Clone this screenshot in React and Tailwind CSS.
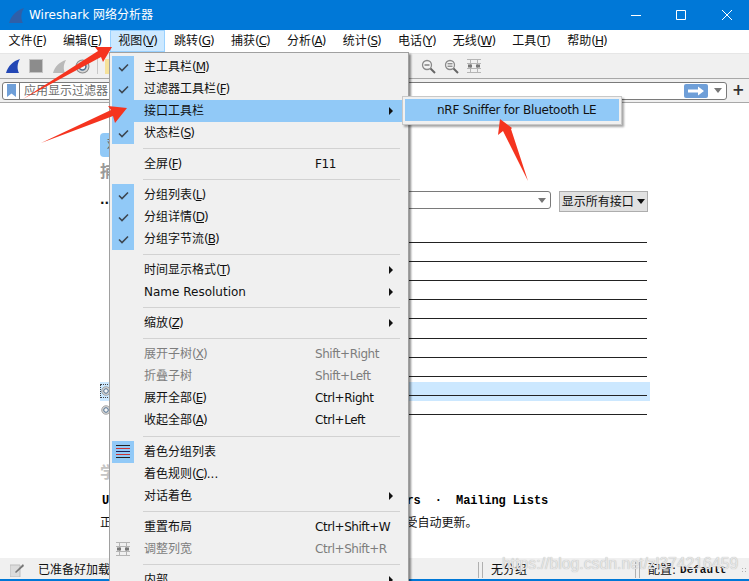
const MENUS = [
  ['文件', 'F'], ['编辑', 'E'], ['视图', 'V'], ['跳转', 'G'], ['捕获', 'C'], ['分析', 'A'],
  ['统计', 'S'], ['电话', 'Y'], ['无线', 'W'], ['工具', 'T'], ['帮助', 'H'],
];

const VIEW_MENU = [
  { label: '主工具栏', key: 'M', checked: true },
  { label: '过滤器工具栏', key: 'F', checked: true },
  { label: '接口工具栏', active: true, more: true },
  { label: '状态栏', key: 'S', checked: true },
  { sep: true },
  { label: '全屏', key: 'F', shortcut: 'F11' },
  { sep: true },
  { label: '分组列表', key: 'L', checked: true },
  { label: '分组详情', key: 'D', checked: true },
  { label: '分组字节流', key: 'B', checked: true },
  { sep: true },
  { label: '时间显示格式', key: 'T', more: true },
  { label: 'Name Resolution', more: true },
  { sep: true },
  { label: '缩放', key: 'Z', more: true },
  { sep: true },
  { label: '展开子树', key: 'X', shortcut: 'Shift+Right', disabled: true },
  { label: '折叠子树', shortcut: 'Shift+Left', disabled: true },
  { label: '展开全部', key: 'E', shortcut: 'Ctrl+Right' },
  { label: '收起全部', key: 'A', shortcut: 'Ctrl+Left' },
  { sep: true },
  { label: '着色分组列表', colorize: true },
  { label: '着色规则', key: 'C', dots: true },
  { label: '对话着色', more: true },
  { sep: true },
  { label: '重置布局', shortcut: 'Ctrl+Shift+W' },
  { label: '调整列宽', shortcut: 'Ctrl+Shift+R', disabled: true, resize: true },
  { sep: true },
  { label: '内部', more: true },
];

function Fin({ color = '#2347b5', className = '' }) {
  return (
    <svg viewBox="0 0 16 16" className={className}>
      <path d="M1 15 C3 8 8 3 15 1 C12 6 12 11 14 15 Z" fill={color} />
    </svg>
  );
}

function ResizeIcon() {
  return (
    <svg viewBox="0 0 14 14" className="w-[14px] h-[14px]">
      <path d="M0 .5H14M0 13.5H14M0 4.5H14M0 9.5H14" stroke="#b5b5b5" />
      <path d="M3.5 0V14M10.5 0V14" stroke="#b5b5b5" />
      <path d="M1 7H5M9 7H13" stroke="#777" strokeWidth="3" />
    </svg>
  );
}

function Zoom({ minus }) {
  return (
    <svg viewBox="0 0 15 15" className="w-[15px] h-[15px]">
      <circle cx="6" cy="6" r="4.5" fill="#f4f4f4" stroke="#8a8a8a" strokeWidth="1.3" />
      {minus ? (
        <path d="M3.5 4.8H8.5M3.5 7.2H8.5" stroke="#666" />
      ) : (
        <path d="M3.5 6H8.5" stroke="#666" strokeWidth="1.2" />
      )}
      <path d="M9.5 9.5L14 14" stroke="#666" strokeWidth="2" />
    </svg>
  );
}

function Globe({ className = '' }) {
  return (
    <svg viewBox="0 0 14 14" className={className}>
      <circle cx="7" cy="7" r="6" fill="#d8d8d8" stroke="#8b8b8b" />
      <circle cx="7" cy="7" r="3.2" fill="#f5f5f5" stroke="#4d6e8e" strokeWidth="1.4" />
    </svg>
  );
}

function Caret({ className = '' }) {
  return (
    <svg viewBox="0 0 8 5" className={`w-2 h-[5px] ${className}`}>
      <path d="M0 0H8L4 5Z" fill="currentColor" />
    </svg>
  );
}

function MoreArrow() {
  return (
    <svg viewBox="0 0 4 8" className="w-1 h-2 absolute left-[277px] top-[7px]">
      <path d="M0 0L4 4L0 8Z" fill="#111" />
    </svg>
  );
}

function Check() {
  return (
    <svg viewBox="0 0 11 9" className="w-[11px] h-[9px]">
      <path d="M1 4.5L4 7.5L10 1.5" fill="none" stroke="#3d4650" strokeWidth="1.6" />
    </svg>
  );
}

function Divider() {
  return (
    <span className="flex gap-[3px] h-[16px]">
      <span className="w-px bg-[#b0b0b0]" />
      <span className="w-px bg-[#b0b0b0]" />
    </span>
  );
}

function AccessKey({ value }) {
  return (
    <span className="tracking-[-1px]">
      (<u>{value}</u>)
    </span>
  );
}

function MenuItem({ item }) {
  if (item.sep) {
    return (
      <div className="h-[9.1px] flex items-center pl-[31px] pr-[5px]">
        <div className="h-px w-full bg-[#d2d2d2]" />
      </div>
    );
  }
  return (
    <div
      className={`relative h-[22px] flex items-center ${item.active ? 'bg-[#91c9f7]' : ''} ${
        item.disabled ? 'text-[#7d7d7d]' : 'text-[#111]'
      }`}
    >
      <span
        className={`w-[22px] h-[22px] flex items-center justify-center shrink-0 ${
          item.checked || item.active || item.colorize ? 'bg-[#91c9f7]' : ''
        }`}
      >
        {item.checked && <Check />}
        {item.colorize && (
          <span className="flex flex-col gap-[2px] w-[14px]">
            <span className="h-px bg-[#222]" />
            <span className="h-px bg-[#c33]" />
            <span className="h-px bg-[#225]" />
            <span className="h-px bg-[#c33]" />
            <span className="h-px bg-[#222]" />
          </span>
        )}
        {item.resize && <ResizeIcon />}
      </span>
      <span className="ml-[10px] w-[171px] whitespace-nowrap">
        {item.label}
        {item.key && <AccessKey value={item.key} />}
        {item.dots && '...'}
      </span>
      {item.shortcut && <span className="whitespace-nowrap tracking-[-0.45px]">{item.shortcut}</span>}
      {item.more && <MoreArrow />}
    </div>
  );
}

function Arrows() {
  return (
    <svg viewBox="0 0 749 581" className="absolute inset-0 w-[749px] h-[581px] pointer-events-none">
      <polygon points="23,99 98,51 95,47 112,47 103,62 101,57" fill="#f5341f" />
      <polygon points="41,143 111,110 108,106 127,108 115,123 113,116" fill="#f5341f" />
      <polygon points="528,181 511,129 512,128 500,119 498,135 503,131" fill="#f5341f" />
    </svg>
  );
}

export default function App() {
  return (
    <div className="relative w-[749px] h-[581px] overflow-hidden bg-white flex flex-col text-[12px] text-[#111] [font-family:'DejaVu_Sans','Noto_Sans_CJK_SC',sans-serif]">
      {/* title bar */}
      <div className="h-[30px] shrink-0 bg-[#0078d7] flex items-center text-white">
        <Fin color="#2f5fa8" className="w-[17px] h-[17px] ml-[8px]" />
        <span className="ml-[4px]">Wireshark 网络分析器</span>
        <div className="ml-auto flex items-center">
          <svg viewBox="0 0 120 12" className="w-[120px] h-3">
            <path d="M2 6.5H12" stroke="#fff" />
            <path d="M47.5 1.5H56.5V10.5H47.5Z" fill="none" stroke="#fff" />
            <path d="M93 1L103 11M103 1L93 11" stroke="#fff" />
          </svg>
        </div>
      </div>

      {/* menu bar */}
      <div className="h-[22px] shrink-0 flex items-center">
        {MENUS.map(([name, key], i) => (
          <span
            key={name}
            className={`h-[22px] flex items-center px-[7.6px] whitespace-nowrap border ${
              i === 2 ? 'bg-[#cce8ff] border-[#99d1ff]' : 'border-transparent'
            }`}
          >
            {name}
            <AccessKey value={key} />
          </span>
        ))}
      </div>

      {/* main toolbar */}
      <div className="h-[26px] mt-[1px] shrink-0 bg-[#f0f0f0] border-t border-[#e6e6e6] border-b border-b-[#a8a8a8] flex items-center pl-[5px]">
        <Fin className="w-[16px] h-[16px]" />
        <span className="ml-[8px] w-[14px] h-[14px] bg-[#8c8c8c] border border-[#c4c4c4]" />
        <Fin color="#b9b9b9" className="ml-[9px] w-[15px] h-[15px]" />
        <Globe className="ml-[8px] w-[15px] h-[15px]" />
        <span className="ml-[7px] w-px h-[16px] bg-[#c8c8c8]" />
        <span className="ml-[7px] w-[14px] h-[15px] bg-[#f6e29a]" />
        <div className="ml-[302px] flex gap-[8px] items-center">
          <Zoom />
          <Zoom minus />
          <ResizeIcon />
        </div>
      </div>

      {/* filter bar */}
      <div className="h-[24px] shrink-0 bg-[#f0f0f0] border-b border-[#a8a8a8] flex items-center pl-[2px]">
        <div className="w-[725px] h-[18px] bg-white border border-[#7a7a7a] rounded-[3px] flex items-center">
          <span className="w-[17px] h-full border-r border-[#7a7a7a] flex items-center justify-center">
            <svg viewBox="0 0 9 13" className="w-[9px] h-[13px]">
              <path d="M0 0H9V13L4.5 9.5L0 13Z" fill="#6f9fd8" />
            </svg>
          </span>
          <span className="ml-[4px] text-[#6d6d6d]">应用显示过滤器</span>
          <span className="ml-auto w-[24px] h-[14px] rounded-[2px] bg-[#6f9fd8] flex items-center justify-center">
            <svg viewBox="0 0 18 10" className="w-[18px] h-[10px]">
              <path d="M1 3.5H11V0.5L17 5L11 9.5V6.5H1Z" fill="#fff" />
            </svg>
          </span>
          <Caret className="ml-[6px] mr-[4px] text-[#777]" />
        </div>
        <span className="ml-[5px] text-[15px] font-bold leading-none text-[#333]">+</span>
      </div>

      {/* welcome page */}
      <div className="flex-1 min-h-0 pl-[100px] pt-[30px] flex flex-col">
        <div className="w-[24px] h-[24px] rounded-l-[4px] bg-[#91c9f7] text-[#555] flex items-center pl-[7px]">欢</div>
        <div className="h-[30px] text-[16px] font-bold text-[#999] leading-[30px]">捕获</div>
        <div className="h-[42px] flex items-start pt-[4px]">
          <span className="font-bold leading-[14px] mt-[2px]">...</span>
          <div className="ml-[34px] w-[403px] h-[18px] border border-[#7a7a7a] rounded-[3px] flex items-center justify-end pr-[4px]">
            <Caret className="text-[#777]" />
          </div>
          <div className="ml-[8px] w-[89px] h-[21px] bg-[#e1e1e1] border border-[#adadad] flex items-center justify-center gap-[3px]">
            显示所有接口
            <Caret className="text-[#111]" />
          </div>
        </div>
        {Array.from({ length: 10 }).map((_, i) => (
          <div
            key={i}
            className={`h-[19.1px] w-[550px] shrink-0 flex items-end pb-[5px] pr-[3px] ${i === 8 ? 'bg-[#cce8ff]' : ''}`}
          >
            <div className="w-[10px] shrink-0 self-center">
              {i >= 8 && (
                <Globe
                  className={`w-[10px] h-[12px] ml-[1px] relative top-[2px] ${
                    i === 8 ? 'outline-1 outline-dotted outline-[#444]' : ''
                  }`}
                />
              )}
            </div>
            <div className="flex-1 h-px bg-[#222]" />
          </div>
        ))}
        <div className="h-[24px] mt-[41px] text-[16px] font-bold text-[#c4c4c4] leading-[24px]">学习</div>
        <div className="mt-[7px] whitespace-pre font-bold pl-[2px] text-black tracking-[-0.12px] [font-family:'Liberation_Mono',monospace]">
          {"User's Guide  · Wiki  · Questions and Answers  ·  Mailing Lists"}
        </div>
        <div className="mt-[4px] whitespace-nowrap">正在运行 Wireshark 3.0.3 (v3.0.3-0-g6130b92b0) 接受自动更新。</div>
      </div>

      {/* status bar */}
      <div className="h-[21px] shrink-0 bg-[#f0f0f0] flex items-center pt-[3px]">
        <svg viewBox="0 0 14 14" className="ml-[10px] w-[14px] h-[14px]">
          <path d="M0 2H10V14H0Z" fill="#dcdcdc" stroke="#bdbdbd" />
          <path d="M5 9L13 1L14 3L6 10Z" fill="#777" />
        </svg>
        <span className="ml-[14px] w-[440px]">已准备好加载或捕获</span>
        <Divider />
        <span className="ml-[8px] w-[144px]">无分组</span>
        <Divider />
        <span className="ml-[8px] flex items-center gap-[4px]">
          配置:
          <span className="[font-family:'Liberation_Mono',monospace] font-bold text-[11px]">Default</span>
        </span>
        <span className="ml-auto mr-[1px] w-[7px] h-[7px] bg-[radial-gradient(#b0b0b0_1px,transparent_1px)] bg-[length:3px_3px]" />
      </div>
      <div className="h-[2px] shrink-0 bg-[#0078d7]" />

      {/* csdn watermark */}
      <span className="absolute left-[502px] top-[552px] text-[15.8px] text-[#e6e6e6] [text-shadow:0_0_1px_#aaa] whitespace-nowrap [font-family:'Liberation_Sans',sans-serif]">
        https://blog.csdn.net/zl374216459
      </span>

      {/* open view menu */}
      <div className="absolute left-[109px] top-[52px] w-[300px] h-[540px] bg-[#f0f0f0] border border-[#a0a0a0] shadow-[2px_2px_2px_rgba(0,0,0,0.45)] pt-[3px] pl-[2px] pr-[3px]">
        {VIEW_MENU.map((item, i) => (
          <MenuItem key={i} item={item} />
        ))}
      </div>

      {/* interface toolbars submenu */}
      <div className="absolute left-[402px] top-[96px] w-[220px] h-[29px] bg-[#f0f0f0] border border-[#c8c8c8] shadow-[2px_2px_2px_rgba(0,0,0,0.35)] p-[2px]">
        <div className="h-[22px] bg-[#91c9f7] flex items-center pl-[32px] tracking-[-0.25px]">nRF Sniffer for Bluetooth LE</div>
      </div>

      <Arrows />
    </div>
  );
}
